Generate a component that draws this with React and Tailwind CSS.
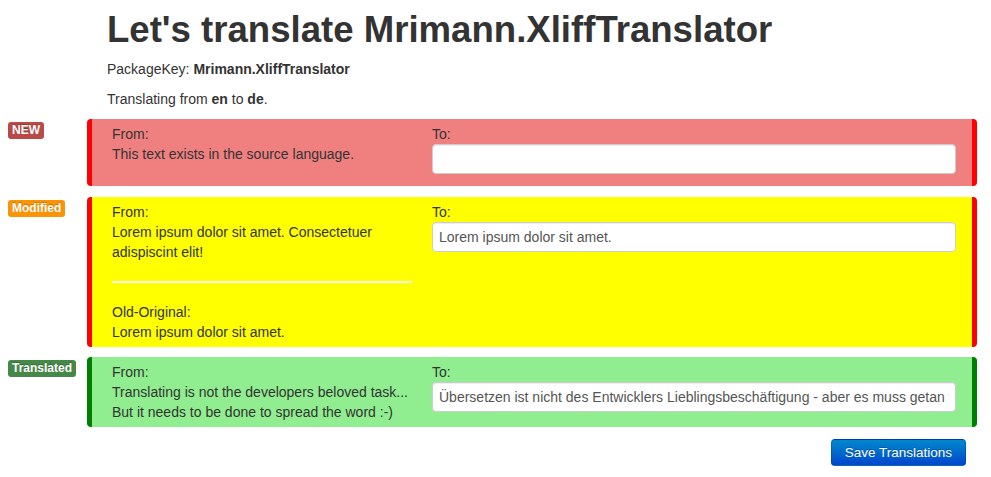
import React from "react";

function Badge({ color, children }) {
  return (
    <span
      className={`block rounded-[3px] px-[4px] py-[2px] text-[12px] leading-[13px] font-bold text-white [text-shadow:0_-1px_0_rgba(0,0,0,0.25)] ${color}`}
    >
      {children}
    </span>
  );
}

function Field({ value }) {
  return (
    <input
      type="text"
      defaultValue={value}
      className="block h-[30px] w-full mb-[7px] rounded-[4px] border border-[#cccccc] bg-white px-[6px] py-[4px] text-[14px] leading-[20px] text-[#555555] shadow-[inset_0_1px_1px_rgba(0,0,0,0.075)] outline-none font-['Liberation_Sans',Arial,sans-serif]"
    />
  );
}

export default function App() {
  return (
    <div className="min-h-screen bg-white text-[14px] leading-[20px] text-[#333333] font-['Liberation_Sans',Arial,sans-serif]">
      <div className="pl-[107px] pt-[10px]">
        <h1 className="mb-[9px] text-[36.6px] leading-[40px] font-bold text-[#333333]">
          Let's translate Mrimann.XliffTranslator
        </h1>
        <p className="mb-[10px]">
          PackageKey: <b>Mrimann.XliffTranslator</b>
        </p>
        <p className="mb-[10px]">
          Translating from <b>en</b> to <b>de</b>.
        </p>
      </div>

      {/* Row 1 - NEW */}
      <div className="flex mb-[11px]">
        <div className="flex w-[87px] shrink-0 items-start pl-[8px] pt-[3px]">
          <Badge color="bg-[#b94a48]">NEW</Badge>
        </div>
        <div className="flex flex-1 mr-[14px] gap-[20px] rounded-[4px] border-x-[5px] border-[#ff0000] bg-[#f08080] pl-[20px] pr-[16px] pt-[5px] pb-[5px]">
          <div className="w-[300px] shrink-0">
            <div>From:</div>
            <div>This text exists in the source language.</div>
          </div>
          <div className="flex-1">
            <label className="block">To:</label>
            <Field value="" />
          </div>
        </div>
      </div>

      {/* Row 2 - Modified */}
      <div className="flex mb-[10px]">
        <div className="flex w-[87px] shrink-0 items-start pl-[8px] pt-[3px]">
          <Badge color="bg-[#f89406]">Modified</Badge>
        </div>
        <div className="flex flex-1 mr-[14px] gap-[20px] rounded-[4px] border-x-[5px] border-[#ff0000] bg-[#ffff00] pl-[20px] pr-[16px] pt-[5px] pb-[5px]">
          <div className="w-[300px] shrink-0">
            <div>From:</div>
            <div>Lorem ipsum dolor sit amet. Consectetuer adispiscint elit!</div>
            <div className="my-[19px] border-t border-b border-t-[#eeeeee] border-b-white"></div>
            <div>Old-Original:</div>
            <div>Lorem ipsum dolor sit amet.</div>
          </div>
          <div className="flex-1">
            <label className="block">To:</label>
            <Field value="Lorem ipsum dolor sit amet." />
          </div>
        </div>
      </div>

      {/* Row 3 - Translated */}
      <div className="flex">
        <div className="flex w-[87px] shrink-0 items-start pl-[8px] pt-[3px]">
          <Badge color="bg-[#468847]">Translated</Badge>
        </div>
        <div className="flex flex-1 mr-[14px] gap-[20px] rounded-[4px] border-x-[5px] border-[#008000] bg-[#90ee90] pl-[20px] pr-[16px] pt-[5px] pb-[5px]">
          <div className="w-[300px] shrink-0">
            <div>From:</div>
            <div className="whitespace-nowrap">Translating is not the developers beloved task...</div>
            <div className="whitespace-nowrap">But it needs to be done to spread the word :-)</div>
          </div>
          <div className="flex-1">
            <label className="block">To:</label>
            <Field value="Übersetzen ist nicht des Entwicklers Lieblingsbeschäftigung - aber es muss getan werden, um das Wort zu verbreiten :-)" />
          </div>
        </div>
      </div>

      <div className="flex justify-end pr-[25px] mt-[12px]">
        <button
          type="button"
          className="rounded-[4px] border border-[rgba(0,0,0,0.15)] bg-linear-to-b from-[#0088cc] to-[#0044cc] px-[13px] py-[3px] text-[13.5px] leading-[19px] text-white [text-shadow:0_-1px_0_rgba(0,0,0,0.25)] font-['Liberation_Sans',Arial,sans-serif]"
        >
          Save Translations
        </button>
      </div>
    </div>
  );
}
